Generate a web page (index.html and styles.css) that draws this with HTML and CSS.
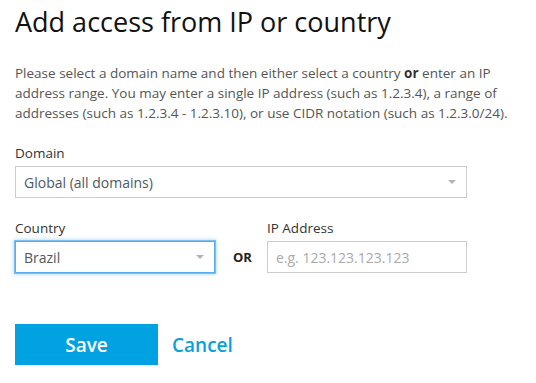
FILE: index.html
```html
<!DOCTYPE html>
<html>
<head>
<meta charset="utf-8">
<link rel="stylesheet" href="styles.css">
</head>
<body>
<div class="page">
  <h1 class="title">Add access from IP or country</h1>
  <p class="intro">Please select a domain name and then either select a country <b>or</b> enter an IP address range. You may enter a single IP address (such as 1.2.3.4), a range of addresses (such as 1.2.3.4 - 1.2.3.10), or use CIDR notation (such as 1.2.3.0/24).</p>
  <div class="field">
    <label class="label">Domain</label>
    <div class="select wide"><span>Global (all domains)</span><i class="caret"></i></div>
  </div>
  <div class="row">
    <div class="field">
      <label class="label">Country</label>
      <div class="select narrow focus"><span>Brazil</span><i class="caret"></i></div>
    </div>
    <div class="or">OR</div>
    <div class="field">
      <label class="label">IP Address</label>
      <div class="input narrow"><span class="ph">e.g. 123.123.123.123</span></div>
    </div>
  </div>
  <div class="actions">
    <button class="save">Save</button>
    <a class="cancel">Cancel</a>
  </div>
</div>
</body>
</html>
```
FILE: styles.css
```css
* { box-sizing: border-box; }
html, body { margin: 0; padding: 0; background: #fff; }
body { font-family: "Open Sans", "Liberation Sans", sans-serif; color: #333; }
.page { padding: 4px 15px 0 15px; }
.title { margin: 0; font-size: 27px; line-height: 36px; font-weight: 400; color: #111; }
.intro { margin: 23px 0 0 0; font-size: 13.5px; line-height: 20px; color: #555; max-width: 510px; }
.intro b { font-weight: 700; color: #333; }
.field { display: flex; flex-direction: column; margin-top: 20px; }
.label { font-size: 13.5px; line-height: 20px; color: #333; margin-bottom: 3px; }
.select, .input { height: 32px; border: 1px solid #ccc; display: flex; align-items: center; padding: 0 8px; font-size: 14px; color: #4d5863; background: #fff; }
.select span, .input span { flex: 1; }
.wide { width: 452px; }
.narrow { width: 200px; }
.focus { border: 1px solid #55adee; box-shadow: 0 0 0 1px #7cc0f2, 0 0 4px 1px rgba(102,175,233,0.6); }
.caret { width: 0; height: 0; border-left: 4px solid transparent; border-right: 4px solid transparent; border-top: 4px solid #b0b4b8; margin-right: 2px; }
.ph { color: #aaa; }
.row { display: flex; align-items: flex-end; }
.or { height: 32px; line-height: 32px; font-size: 13px; font-weight: 700; color: #222; margin: 0 15px 0 18px; }
.actions { display: flex; align-items: center; margin-top: 51px; }
.save { width: 143px; height: 41px; border: 0; background: #00a2e1; color: #fff; font-family: inherit; font-size: 19px; font-weight: 600; padding: 0; }
.cancel { margin-left: 14px; font-size: 19px; font-weight: 600; color: #0aa0dc; }
```
